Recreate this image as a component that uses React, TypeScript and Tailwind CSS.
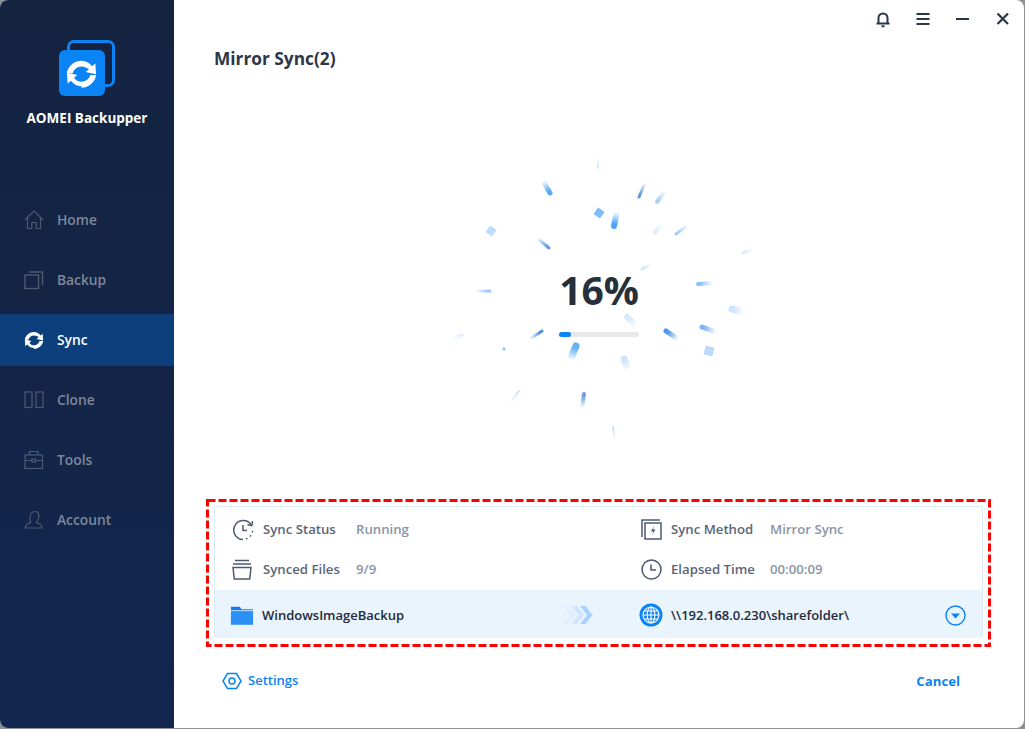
import React from 'react';

const font = "font-['Open_Sans','Noto_Sans',sans-serif]";

// streaks of the progress burst: head x/y, tail x/y, width, colour
const streaks: [number, number, number, number, number, string][] = [
  [550, 193, 543, 181, 5, '#5aa9f5'],
  [598, 168, 598, 157, 2, '#d5e6fa'],
  [639, 197, 645, 183, 3, '#5b92dc'],
  [657, 202, 665, 191, 4, '#a9d0f8'],
  [614, 226, 617, 212, 6, '#4da3f7'],
  [549, 248, 537, 238, 3, '#5f9be0'],
  [655, 232, 663, 223, 5, '#e3f0fd'],
  [676, 234, 688, 225, 3, '#a8cdf5'],
  [743, 253, 753, 249, 3, '#dcebfc'],
  [642, 269, 652, 264, 3, '#d4e6fb'],
  [698, 284, 713, 283, 4, '#8fc3f8'],
  [490, 291, 475, 291, 3, '#9cc8f6'],
  [732, 309, 744, 312, 7, '#cfe4fd'],
  [627, 317, 637, 326, 6, '#d7e8fb'],
  [462, 335, 452, 339, 4, '#e6f1fd'],
  [542, 331, 530, 339, 3, '#4d8fdc'],
  [666, 331, 678, 339, 5, '#4f95e8'],
  [702, 327, 716, 332, 5, '#7db6f4'],
  [576, 346, 570, 360, 7, '#64b1f8'],
  [624, 359, 628, 370, 7, '#cfe4fb'],
  [519, 391, 510, 403, 2, '#cfe2fa'],
  [584, 394, 582, 408, 4, '#6d9fe0'],
  [613, 427, 615, 441, 2, '#cfe0f5'],
];

// diamonds: x, y, size, colour
const diamonds: [number, number, number, string][] = [
  [599, 213, 8, '#7fbcfb'],
  [491, 231, 8, '#c0dcfd'],
  [709, 351, 9, '#bcd9fb'],
  [504, 349, 3, '#9cc8f6'],
];

const Burst = () => (
  <svg className="absolute left-[274px] top-[140px] h-[320px] w-[320px]" viewBox="448 140 320 320">
    <defs>
      {streaks.map(([hx, hy, tx, ty, , c], i) => (
        <linearGradient key={i} id={`s${i}`} gradientUnits="userSpaceOnUse" x1={hx} y1={hy} x2={tx} y2={ty}>
          <stop offset="0.15" stopColor={c} />
          <stop offset="1" stopColor={c} stopOpacity="0" />
        </linearGradient>
      ))}
    </defs>
    {streaks.map(([hx, hy, tx, ty, w], i) => (
      <line key={i} x1={hx} y1={hy} x2={tx} y2={ty} stroke={`url(#s${i})`} strokeWidth={w} strokeLinecap="round" />
    ))}
    {diamonds.map(([x, y, s, c], i) => (
      <rect key={i} x={x - s / 2} y={y - s / 2} width={s} height={s} fill={c} transform={`rotate(${i === 2 ? 15 : 35} ${x} ${y})`} />
    ))}
  </svg>
);

const SyncArrows = ({ size, color }: { size: number; color: string }) => (
  <svg width={size} height={size} viewBox="0 0 24 24" fill={color}>
    <path d="M12 3.200c3 0 5.600 1.500 7.200 3.800l2.300-1.900.5 7.400-7.200-1.500 2.300-1.900C15.900 8.200 14.100 7.200 12 7.200c-2.900 0-5.300 2-6 4.600H1.900C2.700 7 6.900 3.200 12 3.200z" />
    <path d="M12 20.800c-3 0-5.600-1.500-7.200-3.800l-2.300 1.900-.5-7.400 7.200 1.500-2.300 1.900c1.200 1.800 3 2.800 5.100 2.800 2.900 0 5.300-2 6-4.600h4.100c-.8 4.800-5 8.600-10.100 8.700z" />
  </svg>
);

const Logo = () => (
  <div className="relative h-[56px] w-[56px]">
    <div className="absolute left-[8px] top-0 h-[47px] w-[48px] rounded-[7px] border-[3px] border-[#0a84f5]" />
    <div className="absolute left-0 top-[10px] flex h-[46px] w-[46px] items-center justify-center rounded-[6px] bg-[#0a84f5]">
      <SyncArrows size={35} color="#ffffff" />
    </div>
  </div>
);

const stroke = '#4d5a72';
const navIcons: Record<string, React.ReactNode> = {
  Home: (
    <svg width="20" height="20" viewBox="0 0 20 20" fill="none" stroke={stroke} strokeWidth="1.200">
      <path d="M.8 10 10 1l9.200 9M3.500 8v10.500h4.300v-6h4.400v6h4.300V8" />
    </svg>
  ),
  Backup: (
    <svg width="20" height="20" viewBox="0 0 20 20" fill="none" stroke={stroke} strokeWidth="1.400">
      <rect x="1" y="5" width="13.500" height="13.500" />
      <path d="M5 2h13.500v13" />
    </svg>
  ),
  Clone: (
    <svg width="20" height="20" viewBox="0 0 20 20" fill="none" stroke={stroke} strokeWidth="1.200">
      <rect x="1" y="2" width="7" height="15.500" />
      <rect x="12" y="2" width="7" height="15.500" />
    </svg>
  ),
  Tools: (
    <svg width="20" height="20" viewBox="0 0 20 20" fill="none" stroke={stroke} strokeWidth="1.200">
      <rect x="1" y="5" width="17.500" height="13.500" />
      <path d="M5.500 5V1.500h8.500V5M1 10.500h7M11.500 10.500h7" />
      <rect x="8" y="9" width="3.500" height="3" />
    </svg>
  ),
  Account: (
    <svg width="20" height="20" viewBox="0 0 20 20" fill="none" stroke={stroke} strokeWidth="1.200">
      <path d="M6.500 12.500C4.800 9 6 1.500 11 1.500c3.500 0 4.300 3 3.800 5.500-.4 2.200-1.300 4.200-2.300 5.500 2.500 1 5.200 2.500 5.800 5.500H1c.6-3 3-4.600 5.500-5.500z" />
    </svg>
  ),
};

const navItems = ['Home', 'Backup', 'Sync', 'Clone', 'Tools', 'Account'];

const Sidebar = () => (
  <aside className="flex w-[174px] shrink-0 flex-col bg-gradient-to-b from-[#142340] to-[#12264e]">
    <div className="flex flex-col items-center pt-[40px]">
      <div className="ml-[-1px]"><Logo /></div>
      <div className="mt-[13px] text-[13.500px] font-bold leading-[18px] text-white">AOMEI Backupper</div>
    </div>
    <nav className="mt-[67px] flex flex-col gap-[8px]">
      {navItems.map((name) =>
        name === 'Sync' ? (
          <div key={name} className="flex h-[52px] items-center gap-[12px] bg-[#0c3f7c] pl-[23px]">
            <SyncArrows size={22} color="#ffffff" />
            <span className="text-[13.800px] font-semibold text-white">{name}</span>
          </div>
        ) : (
          <div key={name} className="flex h-[52px] items-center gap-[13px] pl-[24px]">
            {navIcons[name]}
            <span className="text-[13.800px] font-semibold text-[#7d8799]">{name}</span>
          </div>
        ),
      )}
    </nav>
  </aside>
);

const TopBar = () => (
  <div className="flex h-[38px] items-center justify-end gap-[22px] pr-[12px] text-[#2b3648]">
    <svg width="18" height="18" viewBox="0 0 18 18" fill="none" stroke="#2b3648" strokeWidth="2">
      <path d="M2.500 13.500h13M4.500 13.500V8a4.500 4.500 0 0 1 9 0v5.500" />
      <path d="M7.500 16.300h3" />
    </svg>
    <svg width="18" height="18" viewBox="0 0 18 18" stroke="#2b3648" strokeWidth="2">
      <path d="M2.500 4h13M2.500 9h13M2.500 14h13" />
    </svg>
    <svg width="18" height="18" viewBox="0 0 18 18" stroke="#2b3648" strokeWidth="2">
      <path d="M2 9h13" />
    </svg>
    <svg width="18" height="18" viewBox="0 0 18 18" stroke="#2b3648" strokeWidth="2.200">
      <path d="M3.500 3.500l10.500 10.500M14 3.500l-10.500 10.500" />
    </svg>
  </div>
);

const g = '#4d5a72';
const statusIcon = (
  <svg width="22" height="22" viewBox="0 0 22 22" fill="none" stroke={g} strokeWidth="1.500">
    <path d="M19 5.500A9.500 9.500 0 1 0 11 20.500" />
    <path d="M11 6v5.500h4" />
    <path d="M20.500 2l-.6 4.500-4.400-.8" />
    <path d="M14 20l1.500-.6M18 17.500l1-1.200M20.300 13.500l.3-1.500" />
  </svg>
);
const methodIcon = (
  <svg width="21" height="21" viewBox="0 0 21 21" fill="none" stroke={g} strokeWidth="1.500">
    <path d="M1 18V1h18" />
    <rect x="4" y="4" width="16" height="16" />
    <path d="M13 7l-3 5.500h2.500L11 16.500l3.500-6H12z" fill={g} stroke="none" />
  </svg>
);
const filesIcon = (
  <svg width="20" height="21" viewBox="0 0 20 21" fill="none" stroke={g} strokeWidth="1.500">
    <path d="M3 1.500h14M1 5h18" />
    <path d="M1 8.500h18l-1.300 11.500H2.300z" />
  </svg>
);
const clockIcon = (
  <svg width="21" height="21" viewBox="0 0 21 21" fill="none" stroke={g} strokeWidth="1.500">
    <circle cx="10.500" cy="10.500" r="9.500" />
    <path d="M10 5.500v5.500h5" />
  </svg>
);

const Info = ({ icon, label, value, iconW, labelW }: { icon: React.ReactNode; label: string; value: string; iconW: string; labelW: string }) => (
  <div className="flex h-[40px] items-center">
    <div className={`flex ${iconW} items-center`}>{icon}</div>
    <span className={`${labelW} text-[13.200px] font-semibold text-[#5a6577]`}>{label}</span>
    <span className="text-[13.200px] font-semibold text-[#8a94a6]">{value}</span>
  </div>
);

const DetailPanel = () => (
  <div className="relative ml-[33px] mr-[34px] px-[7px] pb-[9px] pt-[7px]">
    {/* red dashed annotation */}
    <svg className="absolute left-[-1px] top-0" width="785" height="148" fill="none">
      <rect x="1.500" y="1.500" width="782" height="145" stroke="#ff0000" strokeWidth="3" strokeDasharray="8 3" />
    </svg>
    <div className="rounded-[3px] border border-b-0 border-[#dcebfa] bg-white">
      <div className="grid h-[83px] grid-cols-[407px_1fr] content-center pt-[2px]">
        <div className="pl-[17px]"><Info icon={statusIcon} iconW="w-[31px]" label="Sync Status" value="Running" labelW="w-[93px]" /></div>
        <div className="pl-[19px]"><Info icon={methodIcon} iconW="w-[30px]" label="Sync Method" value="Mirror Sync" labelW="w-[99px]" /></div>
        <div className="pl-[17px]"><Info icon={filesIcon} iconW="w-[31px]" label="Synced Files" value="9/9" labelW="w-[93px]" /></div>
        <div className="pl-[19px]"><Info icon={clockIcon} iconW="w-[30px]" label="Elapsed Time" value="00:00:09" labelW="w-[99px]" /></div>
      </div>
      <div className="grid h-[48px] grid-cols-[407px_1fr] items-center bg-[#eaf4fd] pt-[2px]">
        <div className="flex items-center pl-[15px]">
          <svg width="24" height="22" viewBox="0 0 25 22">
            <path d="M1 2.500h9l2 2.500h12v16H1z" fill="#0f7bec" />
            <path d="M1 7h23v14H1z" fill="#2b8ff5" />
            <path d="M1 6.500h23" stroke="#d7ebff" strokeWidth="1" />
          </svg>
          <span className="ml-[8px] mt-[2px] text-[13px] font-semibold text-[#1f2a3c]">WindowsImageBackup</span>
          <svg className="ml-[158px]" width="31" height="18" viewBox="0 0 31 18">
            <path d="M1 0h5.500l7 9-7 9H1l7-9z" fill="#e0eefd" />
            <path d="M9.500 0H15l7 9-7 9H9.500l7-9z" fill="#cfe4fd" />
            <path d="M18 0h5.500l7 9-7 9H18l7-9z" fill="#a8d2fb" />
          </svg>
        </div>
        <div className="flex items-center justify-between pl-[17px] pr-[16px]">
          <div className="flex items-center">
            <svg width="24" height="24" viewBox="0 0 24 24" fill="none">
              <circle cx="12" cy="12" r="11.500" fill="#0a84f5" />
              <g stroke="#ffffff" strokeWidth="1.100">
                <circle cx="12" cy="12" r="8" />
                <ellipse cx="12" cy="12" rx="3.800" ry="8" />
                <path d="M12 4v16M4 12h16M5 8h14M5 16h14" />
              </g>
            </svg>
            <span className="ml-[8px] mt-[2px] text-[13px] font-semibold text-[#1f2a3c]">{'\\\\192.168.0.230\\sharefolder\\'}</span>
          </div>
          <svg width="21" height="21" viewBox="0 0 21 21" fill="none">
            <circle cx="10.500" cy="10.500" r="9.500" stroke="#0a84f5" strokeWidth="1.400" />
            <path d="M6 8.500h9l-4.500 5z" fill="#0a84f5" />
          </svg>
        </div>
      </div>
    </div>
  </div>
);

export default function App() {
  return (
    <div className={`${font} flex h-[729px] w-[1025px] overflow-hidden bg-[#8b8f98]`}>
      <div className="mb-[1px] mr-[1px] flex h-[728px] w-[1024px] overflow-hidden rounded-[8px] bg-white">
        <Sidebar />
        <main className="relative flex min-w-0 flex-1 flex-col">
          <TopBar />
          <h1 className="ml-[40px] mt-[9px] text-[17.300px] font-bold leading-[24px] text-[#2b3648]">Mirror Sync(2)</h1>
          <Burst />
          <div className="relative mt-[191px] flex flex-col items-center">
            <div className="text-[39px] font-bold leading-[56px] text-[#272f3a]">16%</div>
            <div className="mt-[14px] h-[5px] w-[80px] rounded-full bg-[#e8e8e8]">
              <div className="h-[5px] w-[12px] rounded-full bg-[#0a84f5]" />
            </div>
          </div>
          <div className="mt-[162px]">
            <DetailPanel />
          </div>
          <div className="flex items-center justify-between pl-[48px] pr-[64px] pt-[23px]">
            <div className="flex items-center gap-[6px]">
              <svg width="20" height="18" viewBox="0 0 20 18" fill="none" stroke="#0a84f5" strokeWidth="1.500">
                <path d="M5.500 1.500h9L19 9l-4.500 7.500h-9L1 9z" />
                <circle cx="10" cy="9" r="3" />
              </svg>
              <span className="text-[13px] font-semibold text-[#0a84f5]">Settings</span>
            </div>
            <span className="mt-[2px] text-[13.200px] font-bold text-[#0a84f5]">Cancel</span>
          </div>
        </main>
      </div>
    </div>
  );
}
